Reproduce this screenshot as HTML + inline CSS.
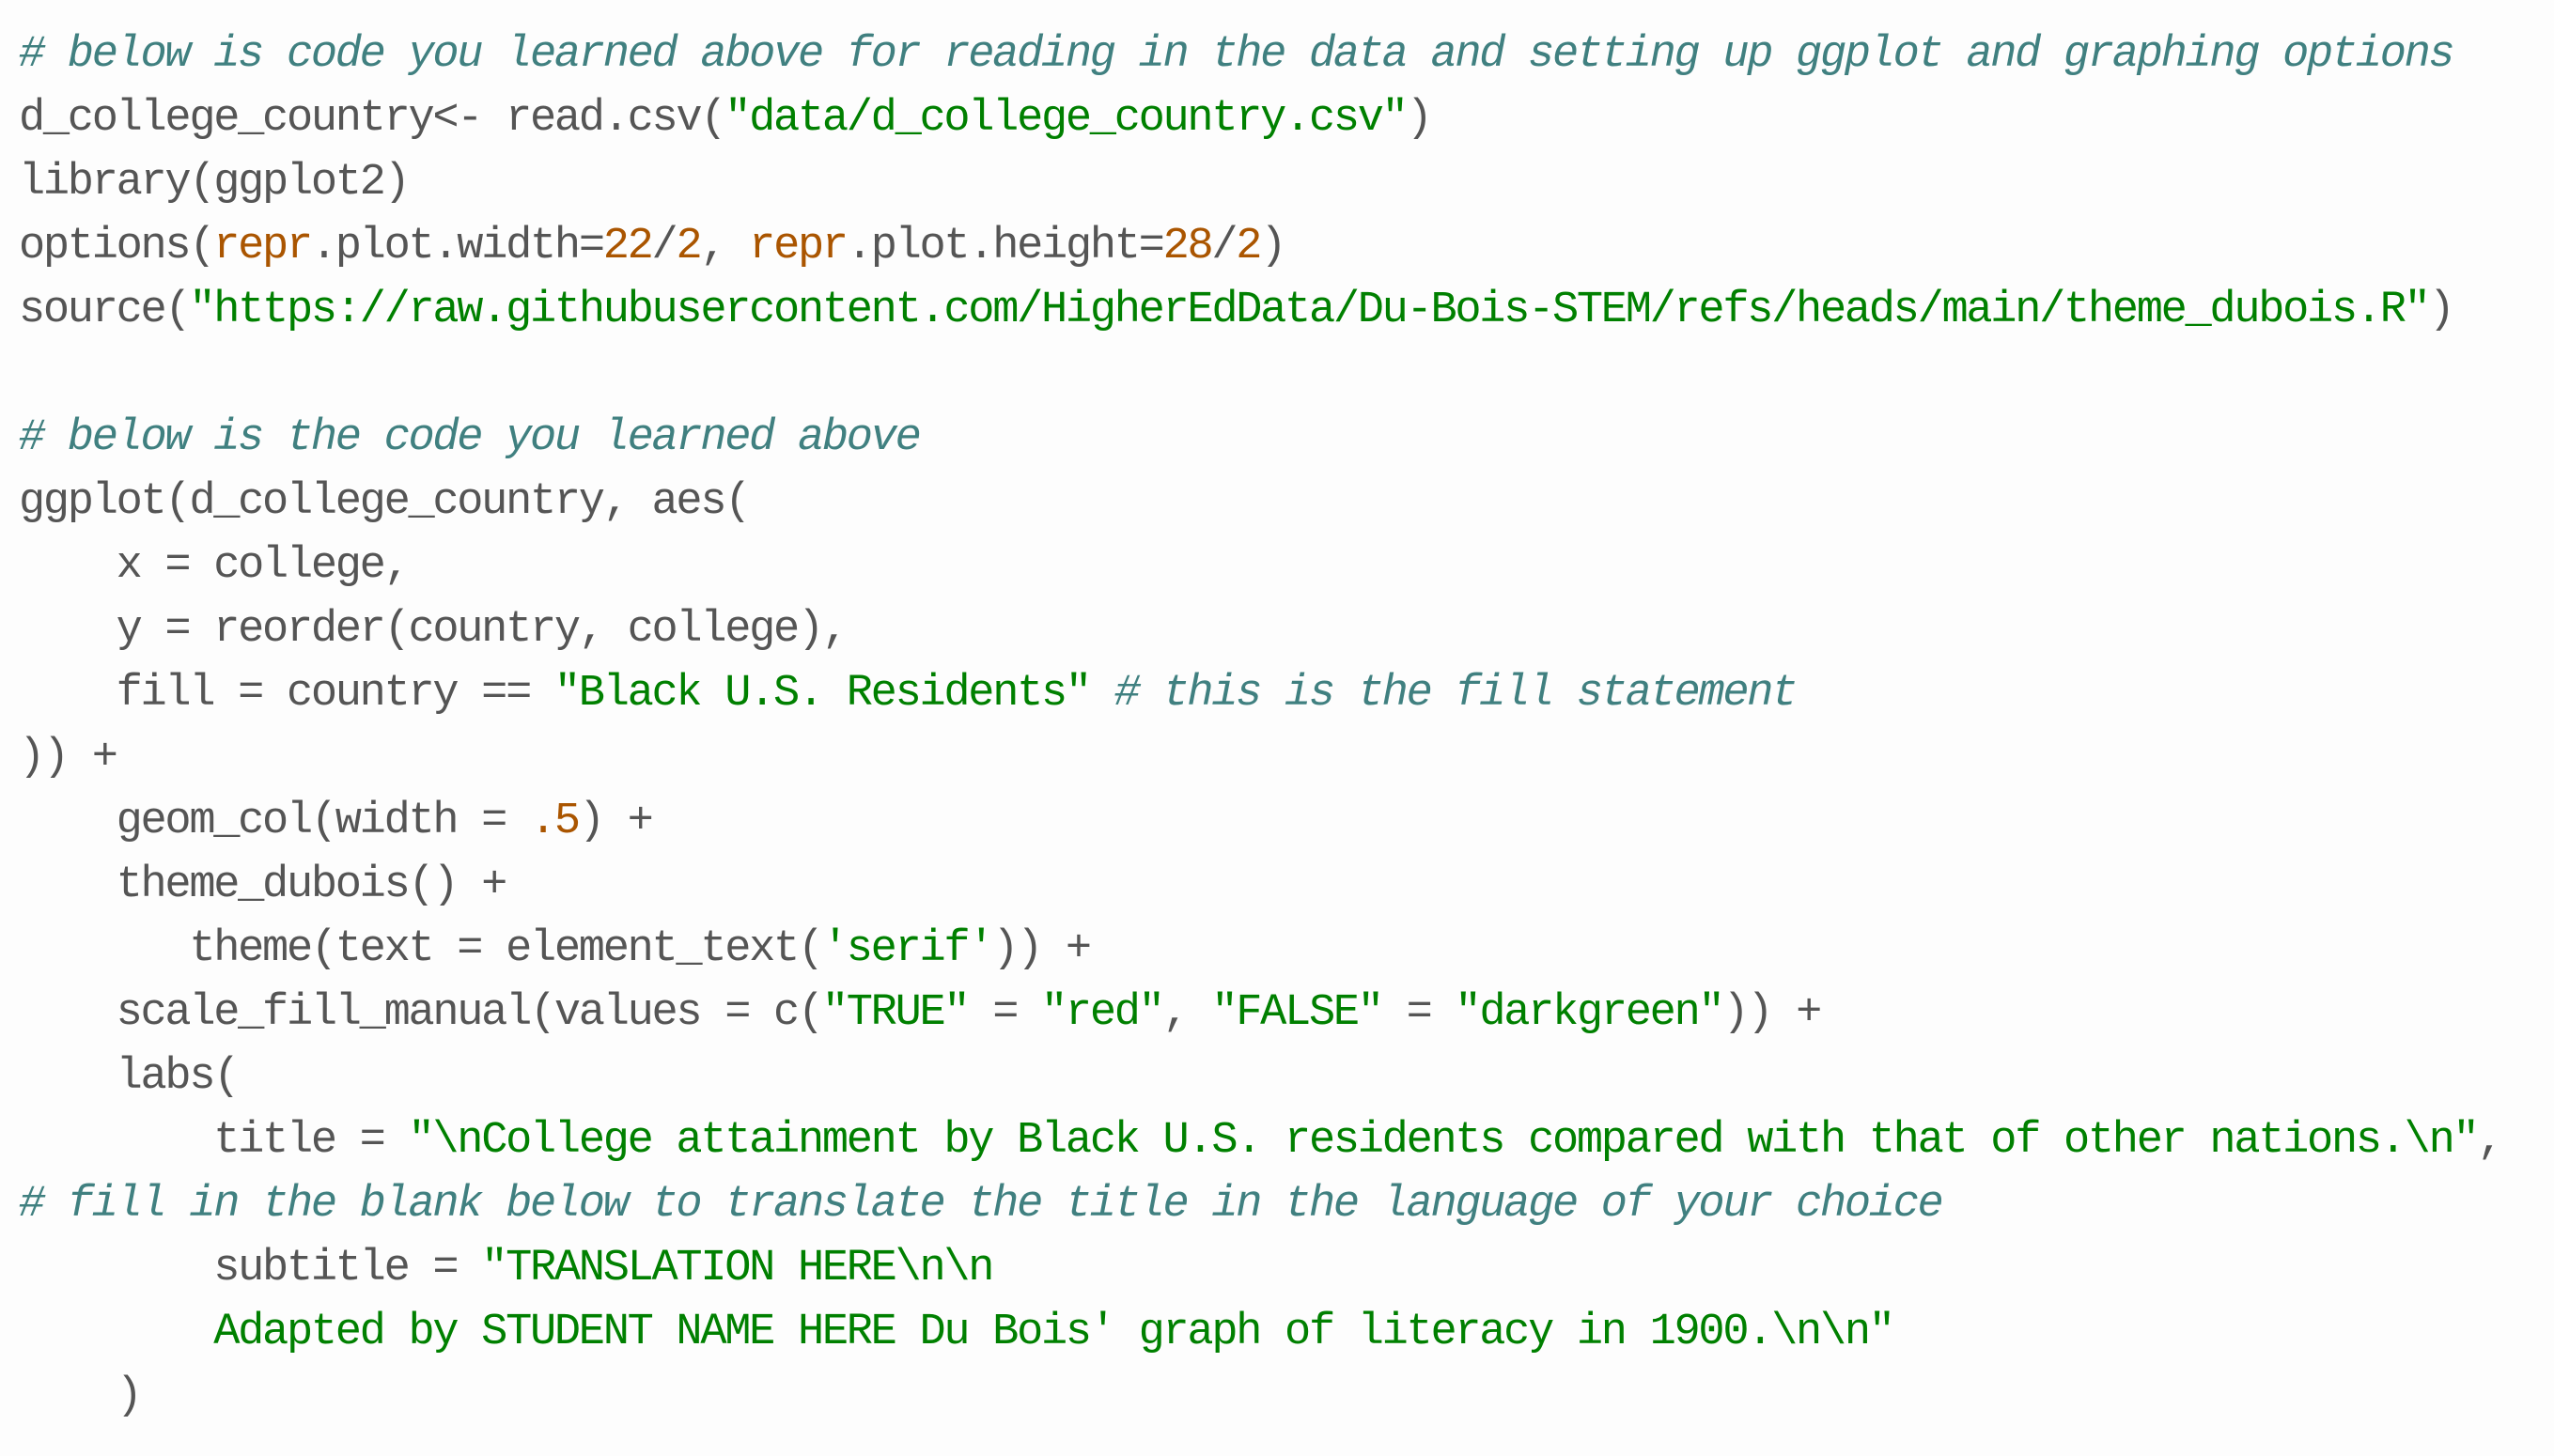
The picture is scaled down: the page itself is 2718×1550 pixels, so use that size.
<!DOCTYPE html>
<html><head><meta charset="utf-8"><style>
html,body{margin:0;padding:0;background:#fdfdfd;width:2718px;height:1550px;overflow:hidden}
pre{margin:0;padding:25px 0 0 20px;font-family:"Liberation Mono","DejaVu Sans Mono",monospace;font-size:47px;letter-spacing:-2.3px;line-height:68px;color:#555555;white-space:pre}
.c{color:#408080;font-style:italic}
.s{color:#008000}
.n{color:#aa5500}
</style></head><body>
<pre><span class="c"># below is code you learned above for reading in the data and setting up ggplot and graphing options</span>
d_college_country&lt;- read.csv(<span class="s">"data/d_college_country.csv"</span>)
library(ggplot2)
options(<span class="n">repr</span>.plot.width=<span class="n">22</span>/<span class="n">2</span>, <span class="n">repr</span>.plot.height=<span class="n">28</span>/<span class="n">2</span>)
source(<span class="s">"https://raw.githubusercontent.com/HigherEdData/Du-Bois-STEM/refs/heads/main/theme_dubois.R"</span>)

<span class="c"># below is the code you learned above</span>
ggplot(d_college_country, aes(
    x = college,
    y = reorder(country, college),
    fill = country == <span class="s">"Black U.S. Residents"</span> <span class="c"># this is the fill statement</span>
)) +
    geom_col(width = <span class="n">.5</span>) +
    theme_dubois() +
       theme(text = element_text(<span class="s">'serif'</span>)) +
    scale_fill_manual(values = c(<span class="s">"TRUE"</span> = <span class="s">"red"</span>, <span class="s">"FALSE"</span> = <span class="s">"darkgreen"</span>)) +
    labs(
        title = <span class="s">"\nCollege attainment by Black U.S. residents compared with that of other nations.\n"</span>,
<span class="c"># fill in the blank below to translate the title in the language of your choice</span>
        subtitle = <span class="s">"TRANSLATION HERE\n\n</span>
<span class="s">        Adapted by STUDENT NAME HERE Du Bois' graph of literacy in 1900.\n\n"</span>
    )
</pre>
</body></html>
